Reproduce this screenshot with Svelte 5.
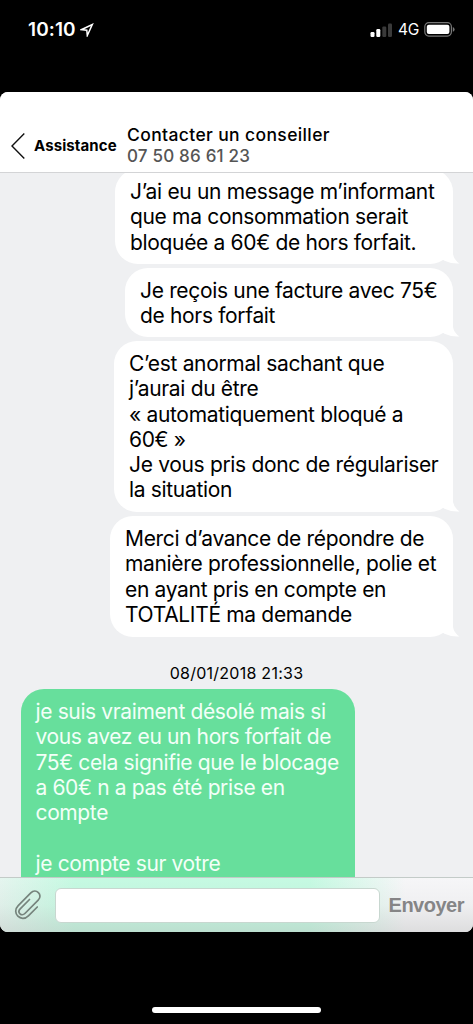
<script lang="ts">
	type Message = { id: string; lines: string[] };

	const sent: Message[] = [
		{
			id: 'limit',
			lines: [
				'J’ai eu un message m’informant',
				'que ma consommation serait',
				'bloquée a 60€ de hors forfait.'
			]
		},
		{ id: 'invoice', lines: ['Je reçois une facture avec 75€', 'de hors forfait'] },
		{
			id: 'complaint',
			lines: [
				'C’est anormal sachant que',
				'j’aurai du être',
				'« automatiquement bloqué a',
				'60€ »',
				'Je vous pris donc de régulariser',
				'la situation'
			]
		},
		{
			id: 'thanks',
			lines: [
				'Merci d’avance de répondre de',
				'manière professionnelle, polie et',
				'en ayant pris en compte en',
				'TOTALITÉ ma demande'
			]
		}
	];

	const reply = [
		'je suis vraiment désolé mais si',
		'vous avez eu un hors forfait de',
		'75€ cela signifie que le blocage',
		'a 60€ n a pas été prise en',
		'compte',
		'',
		'je compte sur votre'
	];

	let draft = $state('');
</script>

<div class="phone">
	<div class="status">
		<span class="time">10:10</span>
		<svg class="location" width="14" height="14" viewBox="0 0 14 14">
			<path d="M1.2 6.7 12.3 1.5 7.3 12.5 6.8 7.3Z" fill="none" stroke="#fff" stroke-width="1.5" />
		</svg>
		<svg class="signal" width="23" height="14" viewBox="0 0 23 14">
			<rect x="0.5" y="9" width="4" height="5" rx="1.2" fill="#fff" />
			<rect x="6.3" y="6" width="4" height="8" rx="1.2" fill="#fff" />
			<rect x="12.3" y="3.5" width="4" height="10.5" rx="1.2" fill="#3a3a3a" />
			<rect x="18" y="0.5" width="4" height="13.5" rx="1.2" fill="#3a3a3a" />
		</svg>
		<span class="network">4G</span>
		<svg class="battery" width="31" height="15" viewBox="0 0 31 15">
			<rect x="0.8" y="0.7" width="26.6" height="13.4" rx="4" fill="none" stroke="#777" stroke-width="1.2" />
			<rect x="2.8" y="2.7" width="22.6" height="9.4" rx="2" fill="#fff" />
			<path d="M28.8 5q1.8 .7 1.8 2.4t-1.8 2.4Z" fill="#777" />
		</svg>
	</div>

	<div class="app">
		<header>
			<svg class="back" width="16" height="28" viewBox="0 0 16 28">
				<path d="M14.3 1.6 2 14 14.3 26.4" fill="none" stroke="#111" stroke-width="1.4" />
			</svg>
			<span class="section">Assistance</span>
			<div class="contact">
				<span class="title">Contacter un conseiller</span>
				<span class="number">07 50 86 61 23</span>
			</div>
		</header>

		<main>
			{#each sent as message (message.id)}
				<div class="bubble sent {message.id}">
					{#each message.lines as line}
						<div class="line">{line}</div>
					{/each}
					<svg class="tail" width="26" height="24" viewBox="0 0 26 24">
						<path d="M19 0V14Q20 20 25.500 23.500Q17 24 10.500 20.800L4 16L12 0Z" fill="#fff" />
					</svg>
				</div>
			{/each}
			<time>08/01/2018 21:33</time>
			<div class="bubble received">
				{#each reply as line}
					<div class="line">{line}</div>
				{/each}
			</div>
		</main>

		<footer>
			<svg class="clip" width="28" height="31" viewBox="0 0 28 31">
				<path
					d="M15.500 9.500 6.200 18.800c-3.400 3.500 1.300 8.200 4.700 4.700L24.200 10.200c5.200-5.300-2.300-12.400-7.400-7.300L4.200 15.600c-7.300 7.400 3 17.400 10.200 10.200L23.300 17"
					fill="none"
					stroke="#76847d"
					stroke-width="1.7"
					stroke-linecap="round"
				/>
			</svg>
			<input type="text" bind:value={draft} />
			<button>Envoyer</button>
		</footer>
	</div>

	<div class="home"></div>
</div>

<style>
	:global(body) {
		background: #000;
	}

	.phone {
		display: flex;
		flex-direction: column;
		align-items: center;
		width: 473px;
		height: 1024px;
		overflow: hidden;
		background: #000;
		color: #000;
		font-family: Inter, 'Liberation Sans', sans-serif;
	}

	.status {
		display: flex;
		align-items: center;
		box-sizing: border-box;
		width: 100%;
		height: 92px;
		padding: 0 18px 33px 28px;
		flex: none;
		color: #fff;
	}

	.time {
		width: 48px;
		font-size: 19px;
		font-weight: 600;
		letter-spacing: 0.1px;
		white-space: nowrap;
	}

	.location {
		margin-left: 4px;
	}

	.signal {
		margin-left: auto;
	}

	.network {
		width: 21px;
		margin: 0 5px;
		font-size: 15.5px;
		font-weight: 400;
		letter-spacing: -0.3px;
	}

	.app {
		display: flex;
		flex-direction: column;
		width: 100%;
		height: 840px;
		flex: none;
		overflow: hidden;
		border-radius: 8px;
		background: #eff0f2;
	}

	header {
		display: flex;
		align-items: flex-start;
		box-sizing: border-box;
		height: 81px;
		flex: none;
		padding-left: 10px;
		border-bottom: 1px solid #d3d4d6;
		background: #fff;
	}

	.back {
		margin-top: 40px;
	}

	.section {
		width: 93px;
		margin: 44px 0 0 8px;
		font-size: 15px;
		font-weight: 700;
		letter-spacing: 0.1px;
		line-height: 20px;
		white-space: nowrap;
	}

	.contact {
		display: flex;
		flex-direction: column;
		margin-top: 32px;
		white-space: nowrap;
	}

	.title {
		font-size: 17.5px;
		font-weight: 500;
		letter-spacing: 0.37px;
		line-height: 22px;
	}

	.number {
		color: #555;
		font-size: 17px;
		font-weight: 500;
		letter-spacing: 0.2px;
		line-height: 21px;
	}

	main {
		display: flex;
		flex-direction: column;
		align-items: flex-end;
		flex: 1;
		min-height: 0;
		overflow: hidden;
	}

	.bubble {
		position: relative;
		box-sizing: border-box;
		flex: none;
		padding: 10px 15px 9px;
		border-radius: 23px;
		font-size: 21px;
		letter-spacing: -0.33px;
		line-height: 25.3px;
	}

	.line {
		height: 25.3px;
		white-space: pre;
	}

	.sent {
		margin: 0 20px 4px 0;
		background: #fff;
	}

	.limit {
		width: 338px;
		height: 95px;
		margin-top: -4px;
	}

	.invoice {
		width: 328px;
		height: 69px;
	}

	.complaint {
		width: 339px;
		height: 171px;
	}

	.thanks {
		width: 343px;
		height: 121px;
	}

	.tail {
		position: absolute;
		right: -7px;
		bottom: 0;
	}

	time {
		align-self: center;
		margin-top: 22px;
		font-size: 16px;
		letter-spacing: 0.25px;
		line-height: 20px;
	}

	.received {
		align-self: flex-start;
		width: 334px;
		height: 240px;
		margin: 6px 0 0 20.5px;
		background: #67df9c;
		color: #f3fff8;
		letter-spacing: -0.37px;
	}

	footer {
		display: flex;
		align-items: center;
		box-sizing: border-box;
		height: 55px;
		flex: none;
		padding: 0 9px 0 14px;
		border-top: 1px solid #c3cbc8;
		background:
			linear-gradient(rgba(255, 255, 255, 0.1), rgba(200, 200, 200, 0.12) 50%, rgba(185, 185, 185, 0.4)),
			linear-gradient(90deg, #e2f4ed 0, #bff9df 75px, #bff9df 310px, #f5f5f7 405px);
	}

	input {
		box-sizing: border-box;
		width: 325px;
		height: 35px;
		margin-left: 13px;
		padding: 0 8px;
		border: 1px solid #c8d7d0;
		border-radius: 6px;
		background: #fff;
		font: inherit;
	}

	button {
		margin-left: auto;
		padding: 0;
		border: 0;
		background: none;
		color: #858586;
		font-family: 'Liberation Sans', Arial, sans-serif;
		font-size: 20px;
		font-weight: 700;
		letter-spacing: -0.5px;
	}

	.home {
		width: 169px;
		height: 6px;
		margin-top: 75px;
		border-radius: 3px;
		background: #fff;
	}
</style>
